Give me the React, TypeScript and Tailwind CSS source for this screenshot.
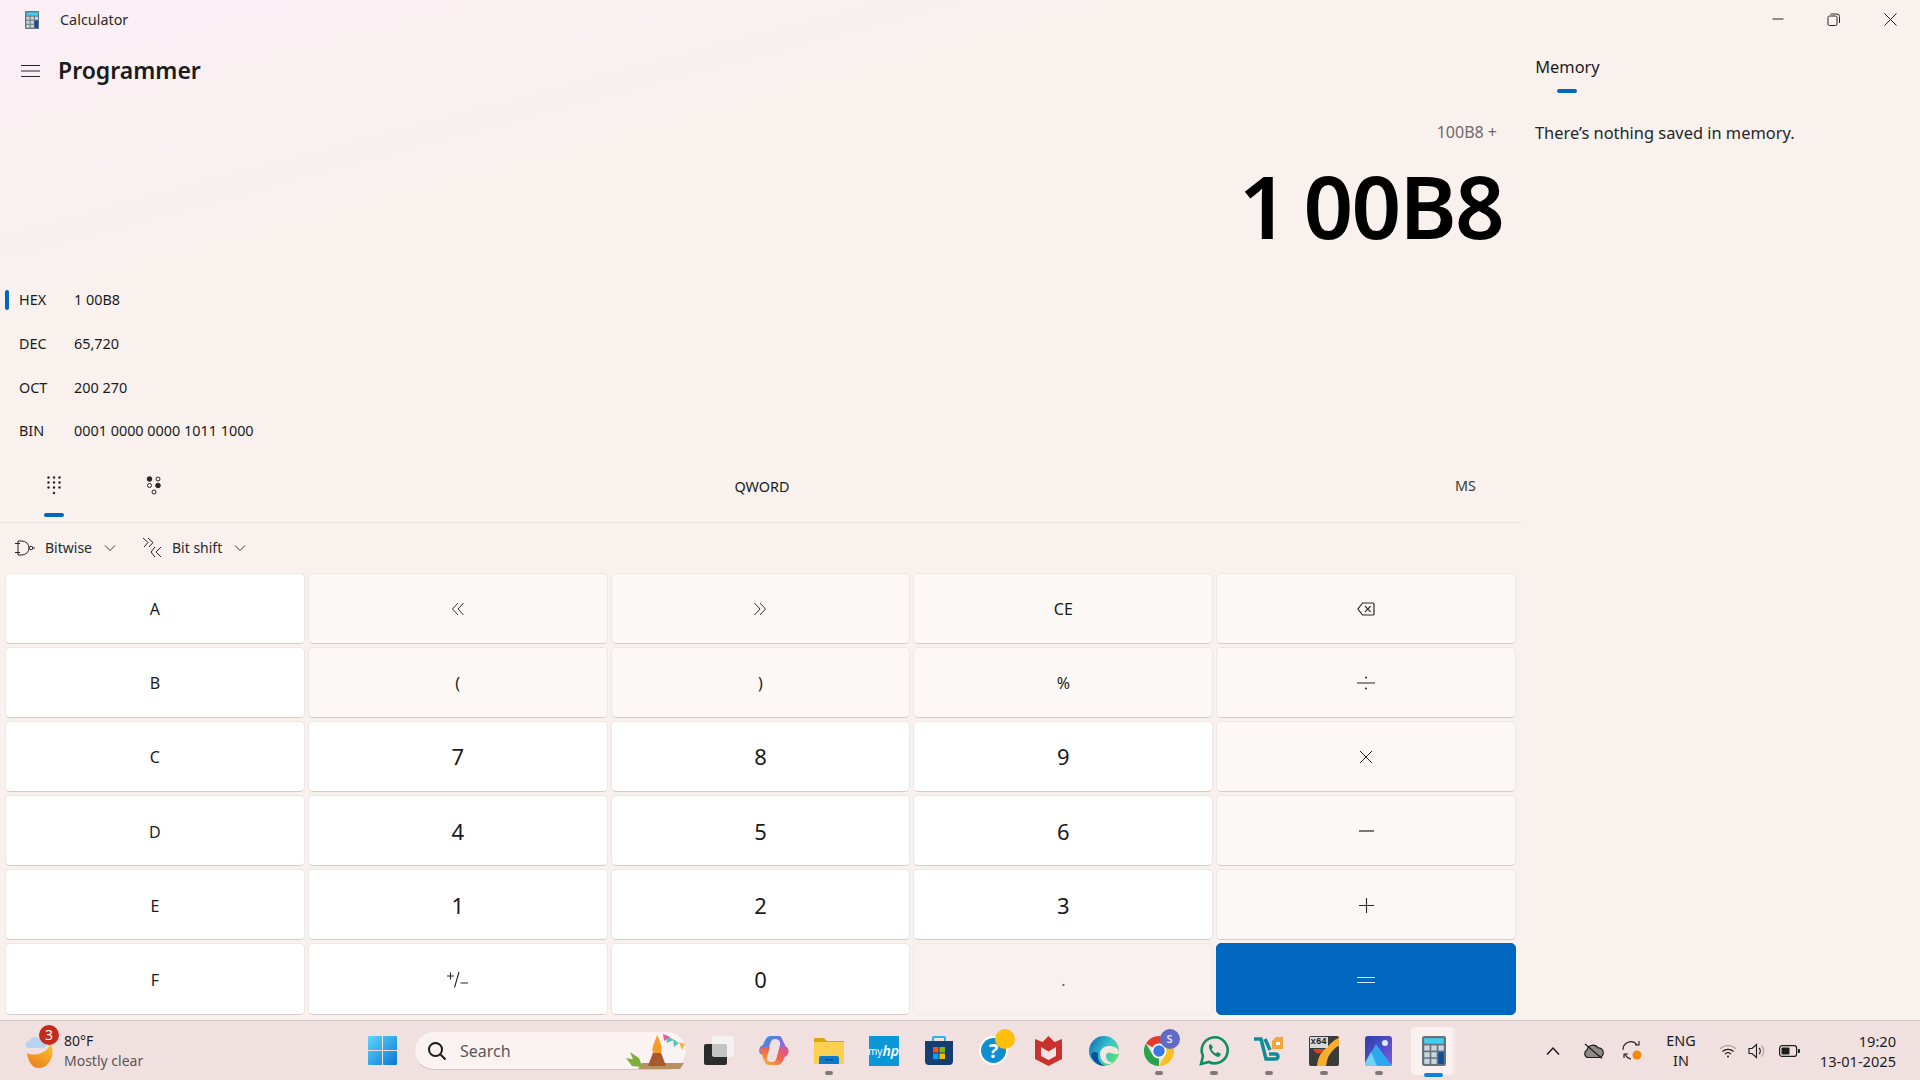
import React from "react";

const Chevron: React.FC<{ dir?: "down" | "up" }> = ({ dir = "down" }) => (
  <svg width="12" height="12" viewBox="0 0 12 12" fill="none" stroke="#3a3a3a" strokeWidth="1">
    <path d={dir === "down" ? "M1 3.5 6 8.5 11 3.5" : "M1 8.5 6 3.5 11 8.5"} />
  </svg>
);

const CalcIcon: React.FC<{ size: number }> = ({ size }) => (
  <svg width={size * 0.8} height={size} viewBox="0 0 16 20">
    <rect x="0" y="0" width="16" height="20" rx="1.5" fill="#66717c" />
    <rect x="1.5" y="1.5" width="13" height="3.6" fill="#3fd0f0" />
    <rect x="1.5" y="6.3" width="3.6" height="3.4" fill="#c9d6de" />
    <rect x="6.2" y="6.3" width="3.6" height="3.4" fill="#c9d6de" />
    <rect x="10.9" y="6.3" width="3.6" height="3.4" fill="#c9d6de" />
    <rect x="1.5" y="10.8" width="3.6" height="3.4" fill="#c9d6de" />
    <rect x="6.2" y="10.8" width="3.6" height="3.4" fill="#c9d6de" />
    <rect x="1.5" y="15.2" width="3.6" height="3.4" fill="#c9d6de" />
    <rect x="6.2" y="15.2" width="3.6" height="3.4" fill="#c9d6de" />
    <rect x="10.9" y="10.8" width="3.6" height="7.8" fill="#0d4f94" />
  </svg>
);

const Stroke: React.FC<{ size?: number; w?: number; d: string; color?: string; sw?: number }> = ({
  size = 16,
  w,
  d,
  color = "#262626",
  sw = 1,
}) => (
  <svg width={w ?? size} height={size} viewBox={`0 0 ${w ?? size} ${size}`} fill="none" stroke={color} strokeWidth={sw}>
    <path d={d} />
  </svg>
);

type Key = { label?: string; icon?: React.ReactNode; kind: "white" | "soft" | "off" | "accent"; big?: boolean };

const keys: Key[] = [
  { label: "A", kind: "white" },
  { icon: <Stroke d="M8 2 2.5 8 8 14M13.5 2 8 8 13.5 14" color="#333" />, kind: "soft" },
  { icon: <Stroke d="M8 2 13.5 8 8 14M2.5 2 8 8 2.5 14" color="#333" />, kind: "soft" },
  { label: "CE", kind: "soft" },
  {
    icon: <Stroke w={18} size={14} d="M5.5 1H16a1 1 0 0 1 1 1V12a1 1 0 0 1-1 1H5.5L1 7ZM8 4.2 13.6 9.8M13.6 4.2 8 9.8" sw={1.2} />,
    kind: "soft",
  },
  { label: "B", kind: "white" },
  { label: "(", kind: "soft" },
  { label: ")", kind: "soft" },
  { label: "%", kind: "soft" },
  {
    icon: (
      <svg width="18" height="14" viewBox="0 0 18 14" fill="#262626">
        <rect x="0" y="6.5" width="18" height="1" />
        <circle cx="9" cy="1.5" r="1" />
        <circle cx="9" cy="12.5" r="1" />
      </svg>
    ),
    kind: "soft",
  },
  { label: "C", kind: "white" },
  { label: "7", kind: "white", big: true },
  { label: "8", kind: "white", big: true },
  { label: "9", kind: "white", big: true },
  { icon: <Stroke size={14} d="M1 1 13 13M13 1 1 13" />, kind: "soft" },
  { label: "D", kind: "white" },
  { label: "4", kind: "white", big: true },
  { label: "5", kind: "white", big: true },
  { label: "6", kind: "white", big: true },
  { icon: <Stroke size={15} d="M0 7H15" sw={1.2} />, kind: "soft" },
  { label: "E", kind: "white" },
  { label: "1", kind: "white", big: true },
  { label: "2", kind: "white", big: true },
  { label: "3", kind: "white", big: true },
  { icon: <Stroke size={15} d="M0 7.5H15M7.5 0V15" sw={1.1} />, kind: "soft" },
  { label: "F", kind: "white" },
  {
    icon: <Stroke w={21} size={17} d="M0 5H7M3.5 1.5V8.5M7.5 16.5 12 1M13.5 12H21" sw={1.1} />,
    kind: "white",
  },
  { label: "0", kind: "white", big: true },
  { label: ".", kind: "off" },
  { icon: <Stroke w={18} size={8} d="M0 1.5H18M0 6.5H18" color="#d5e6f6" sw={1.2} />, kind: "accent" },
];

const keyClass = {
  white: "bg-white border-[#ece6e4] border-b-[#d3cac9]",
  soft: "bg-[#fbf8f6] border-[#ece6e4] border-b-[#d3cac9]",
  off: "bg-[#f9f1ef] border-[#f1e9e7] text-[#6b6361]",
  accent: "bg-[#0067c0] border-[#0067c0]",
};

const modes = [
  { name: "HEX", value: "1 00B8", on: true },
  { name: "DEC", value: "65,720" },
  { name: "OCT", value: "200 270" },
  { name: "BIN", value: "0001 0000 0000 1011 1000" },
];

const Dots = () => (
  <svg width="14" height="19" viewBox="0 0 14 19" fill="#262626">
    {[1.5, 7, 12.5].map((x) =>
      [1.5, 6.5, 11.5].map((y) => <circle key={`${x}-${y}`} cx={x} cy={y} r="1.2" />)
    )}
    <circle cx="7" cy="17" r="1.2" />
  </svg>
);

const BitDots = () => (
  <svg width="16" height="19" viewBox="0 0 16 19" fill="none" stroke="#262626" strokeWidth="1">
    <circle cx="3.5" cy="3" r="2.3" fill="#262626" />
    <circle cx="12" cy="3" r="2" />
    <circle cx="3.5" cy="9.5" r="2" />
    <circle cx="12" cy="9.5" r="2.3" fill="#262626" />
    <circle cx="8" cy="16" r="2" />
  </svg>
);

const TaskIcon: React.FC<{ children: React.ReactNode; running?: boolean }> = ({ children, running }) => (
  <div className="relative flex h-[60px] w-[55px] items-center justify-center">
    {children}
    {running && <span className="absolute bottom-[6px] h-[4px] w-[8px] rounded-full bg-[#7f7778]" />}
  </div>
);

const WindowsLogo = () => (
  <svg width="29" height="29" viewBox="0 0 29 29">
    <defs>
      <linearGradient id="win" x1="0" y1="0" x2="1" y2="1">
        <stop offset="0" stopColor="#5fd4fb" />
        <stop offset="1" stopColor="#0a78d4" />
      </linearGradient>
    </defs>
    <path d="M0 1a1 1 0 0 1 1-1H14V14H0ZM15 0H28a1 1 0 0 1 1 1V14H15ZM0 15H14V29H1a1 1 0 0 1-1-1ZM15 15H29V28a1 1 0 0 1-1 1H15Z" fill="url(#win)" />
  </svg>
);

const Bonfire = () => (
  <svg width="62" height="36" viewBox="0 0 62 36">
    <path d="M14 36 18 30H60L56 36Z" fill="#b79063" />
    <path d="M2 25 12 27 18 34 8 33ZM6 19 15 25 18 33 10 29Z" fill="#7fae3c" />
    <path d="M24 33 33 9 42 33Z" fill="#a9592c" />
    <path d="M33 2C36 9 39 13 37 20H29C27 14 31 9 33 2Z" fill="#f59b26" />
    <path d="M42 2 50 7 43 10ZM49 6 55 10 50 14Z" fill="#4cc9b8" />
    <path d="M39 1 46 4 40 8Z" fill="#e85aa8" />
    <path d="M55 9 61 11 58 17Z" fill="#f2b640" />
  </svg>
);

const Taskbar = () => (
  <div className="flex h-[60px] items-center border-t border-[#cfc6c5] bg-[#f0e0df] text-[#1d1d1d]">
    <div className="relative ml-[24px] flex w-[331px] items-center gap-[9px]">
      <svg width="31" height="36" viewBox="0 0 31 36">
        <defs>
          <linearGradient id="moon" x1="0.8" y1="0" x2="0.3" y2="1">
            <stop offset="0" stopColor="#f9c52c" />
            <stop offset="1" stopColor="#ee7f1e" />
          </linearGradient>
        </defs>
        <path d="M3 20C12 24 23 20 27 10 32 24 24 35 14 35 8 35 4 28 3 20Z" fill="url(#moon)" />
        <path d="M3 15A4 4 0 0 1 5 8 7 7 0 0 1 17 7 4 4 0 0 1 20 15Z" fill="#b9d3f3" />
      </svg>
      <span className="absolute left-[15px] top-[-6px] flex h-[20px] w-[20px] items-center justify-center rounded-full bg-[#c42b1c] text-[14px] leading-none text-white">
        3
      </span>
      <div className="flex flex-col text-[14px] leading-[20px]">
        <span>80°F</span>
        <span className="text-[#5b5557]">Mostly clear</span>
      </div>
    </div>
    <div className="flex h-[60px] w-[59px] items-center justify-start pl-[13px]">
      <WindowsLogo />
    </div>
    <div className="flex h-[39px] w-[273px] items-center rounded-full border border-[#ecdfdd] border-b-[#d3c8c8] bg-[#faf3f1] pl-[12px]">
      <svg width="20" height="20" viewBox="0 0 20 20" fill="none" stroke="#1a1a1a" strokeWidth="2">
        <circle cx="8.5" cy="8.5" r="6.5" />
        <path d="M13.5 13.5 18.5 18.5" />
      </svg>
      <span className="ml-[13px] flex-1 text-[16px] text-[#5b5557]">Search</span>
      <Bonfire />
    </div>
    <div className="flex pl-[4px]">
      <TaskIcon>
        <svg width="30" height="29" viewBox="0 0 30 29">
          <rect x="0" y="8" width="23" height="21" rx="2" fill="#2b2b2b" />
          <rect x="8" y="0" width="22" height="21" rx="2" fill="#f7f7f7" fillOpacity="0.75" />
        </svg>
      </TaskIcon>
      <TaskIcon>
        <svg width="30" height="29" viewBox="0 0 30 29">
          <defs>
            <linearGradient id="cop1" x1="0" y1="0" x2="1" y2="1">
              <stop offset="0" stopColor="#1f9be0" />
              <stop offset="0.5" stopColor="#7a6fe0" />
              <stop offset="1" stopColor="#e85aa8" />
            </linearGradient>
            <linearGradient id="cop2" x1="0" y1="1" x2="1" y2="0">
              <stop offset="0" stopColor="#f5c23c" />
              <stop offset="0.5" stopColor="#f0694a" />
              <stop offset="1" stopColor="#d84fa8" />
            </linearGradient>
          </defs>
          <path d="M11 0H20C22 0 23 2 24 5L28 13C31 16 28 21 25 21H18L21 9C22 5 19 3 16 3 13 3 12 5 11 8L8 18 1 18C-1 14 1 10 4 9 6 4 8 0 11 0Z" fill="url(#cop1)" />
          <path d="M19 29H10C7 29 6 27 5 24L2 17C0 13 2 11 5 11H11L8 21C7 25 10 26 13 26 16 26 17 24 18 21L21 11 28 11C31 15 29 19 26 20 24 25 22 29 19 29Z" fill="url(#cop2)" />
        </svg>
      </TaskIcon>
      <TaskIcon running>
        <svg width="30" height="27" viewBox="0 0 30 27">
          <path d="M0 2a1 1 0 0 1 1-1H10L13 4H30V10H0Z" fill="#d9a512" />
          <rect x="0" y="5" width="30" height="22" rx="1" fill="#fbd04f" />
          <path d="M5 27V21a2 2 0 0 1 2-2H23a2 2 0 0 1 2 2V27Z" fill="#0a7ccf" />
          <rect x="11" y="22" width="8" height="1.5" fill="#06457c" />
        </svg>
      </TaskIcon>
      <TaskIcon>
        <div className="flex h-[30px] w-[30px] items-center justify-center bg-[#0b96d8] text-[10px] leading-none text-white">
          my<span className="text-[14px] font-semibold italic">hp</span>
        </div>
      </TaskIcon>
      <TaskIcon>
        <svg width="30" height="30" viewBox="0 0 30 30">
          <path d="M9 6V2a1 1 0 0 1 1-1H20a1 1 0 0 1 1 1V6" fill="none" stroke="#2bb2e6" strokeWidth="2" />
          <path d="M1 5H29V25a4 4 0 0 1-4 4H5a4 4 0 0 1-4-4Z" fill="#153e72" />
          <rect x="9" y="11" width="5.5" height="5.5" fill="#f25022" />
          <rect x="15.5" y="11" width="5.5" height="5.5" fill="#7fba00" />
          <rect x="9" y="17.5" width="5.5" height="5.5" fill="#00a4ef" />
          <rect x="15.5" y="17.5" width="5.5" height="5.5" fill="#ffb900" />
        </svg>
      </TaskIcon>
      <TaskIcon>
        <div className="relative flex h-[29px] w-[29px] items-center justify-center rounded-full border-2 border-white bg-[#0f8fd0] text-[20px] font-bold leading-none text-white">
          ?
          <span className="absolute right-[-9px] top-[-9px] h-[20px] w-[20px] rounded-full bg-[#ffc00c]" />
        </div>
      </TaskIcon>
      <TaskIcon>
        <svg width="27" height="30" viewBox="0 0 27 30">
          <path d="M0 3 7.5 6 13.5 0 19.5 6 27 3V23L13.5 30 0 23Z" fill="#c8322e" />
          <path d="M6 11 13.5 15.5 21 11V20L13.5 24 6 20Z" fill="#f3e4e2" />
        </svg>
      </TaskIcon>
      <TaskIcon>
        <svg width="30" height="30" viewBox="0 0 30 30">
          <defs>
            <linearGradient id="edge1" x1="0" y1="0" x2="1" y2="0.6">
              <stop offset="0" stopColor="#0d63b8" />
              <stop offset="0.6" stopColor="#33c6c8" />
              <stop offset="1" stopColor="#5fdc7a" />
            </linearGradient>
          </defs>
          <circle cx="15" cy="15" r="15" fill="url(#edge1)" />
          <path d="M30 17C30 12 25 10 20 10 14 10 11 14 11 18 11 25 17 30 24 27 20 26 17 24 17 20 17 17 19 16 22 17 25 18 28 19 30 17Z" fill="#f4e4e2" />
          <path d="M2 19C4 27 11 30 16 30 11 28 8 23 9 17 5 15 3 16 2 19Z" fill="#0b4f9f" />
        </svg>
      </TaskIcon>
      <TaskIcon running>
        <div className="relative">
          <svg width="30" height="30" viewBox="0 0 30 30">
            <path d="M15 0A15 15 0 0 1 28 7.5H15A7.5 7.5 0 0 0 8.5 11.2L2 7.5A15 15 0 0 1 15 0Z" fill="#e33b2e" />
            <path d="M28 7.5A15 15 0 0 1 15 30L21.5 18.7A7.5 7.5 0 0 0 21.5 11.2Z" fill="#f9c11f" />
            <path d="M2 7.5 8.5 18.7A7.5 7.5 0 0 0 15 22.5L15 30A15 15 0 0 1 2 7.5Z" fill="#2ba24c" />
            <circle cx="15" cy="15" r="6.5" fill="#3b78e7" stroke="#fff" strokeWidth="1.5" />
          </svg>
          <span className="absolute right-[-6px] top-[-7px] flex h-[20px] w-[20px] items-center justify-center rounded-full bg-[#5f6bc4] text-[11px] font-semibold leading-none text-[#e3e5f5]">
            S
          </span>
        </div>
      </TaskIcon>
      <TaskIcon running>
        <svg width="30" height="30" viewBox="0 0 30 30" fill="none">
          <path d="M2 28 4 20A13 13 0 1 1 10 26Z" stroke="#128c63" strokeWidth="2.6" />
          <path d="M10 9C9 14 15 21 20 21L22 18 18.5 16 17 17.5C15 16.5 13.5 15 12.5 13L14 11.5 12 8Z" fill="#128c63" />
        </svg>
      </TaskIcon>
      <TaskIcon running>
        <svg width="31" height="30" viewBox="0 0 31 30" fill="none">
          <path d="M1 3H8L13 23H22C26 23 26 18 22 18H16M12 3 17 14" stroke="#128a97" strokeWidth="3.5" />
          <path d="M19 5 23 1H30V13H19Z" fill="#f5a43c" />
          <rect x="23" y="6" width="4" height="3" fill="#fff" />
        </svg>
      </TaskIcon>
      <TaskIcon running>
        <div className="relative flex h-[30px] w-[30px] overflow-hidden rounded-[2px] bg-[#3c3b3c]">
          <svg width="30" height="30" viewBox="0 0 30 30">
            <path d="M8 30C9 20 13 15 17 12 22 8 24 4 30 2V10C26 11 24 14 21 18 18 22 18 26 17 30Z" fill="#f8ae2d" />
            <path d="M4 13C7 19 13 19 15 13Z" fill="#d9471f" />
          </svg>
          <span className="absolute left-[1px] top-[1px] bg-[#d8d8d8] px-[1px] font-['Liberation_Mono',monospace] text-[9px] font-bold leading-[11px] text-[#222]">
            x64
          </span>
        </div>
      </TaskIcon>
      <TaskIcon running>
        <svg width="27" height="30" viewBox="0 0 27 30">
          <defs>
            <linearGradient id="ph" x1="0" y1="0" x2="1" y2="1">
              <stop offset="0" stopColor="#2a3fa8" />
              <stop offset="1" stopColor="#7b5be0" />
            </linearGradient>
          </defs>
          <rect width="27" height="30" rx="3" fill="url(#ph)" />
          <path d="M0 27 11 8 27 30H3A3 3 0 0 1 0 27Z" fill="#2fa7f0" />
          <path d="M0 27 6 16 12 30H3A3 3 0 0 1 0 27Z" fill="#6fd3f7" />
          <circle cx="20" cy="7" r="3" fill="#dbe9fb" />
        </svg>
      </TaskIcon>
      <div className="relative flex h-[60px] w-[55px] items-center justify-center">
        <div className="absolute left-[6px] top-[6px] h-[48px] w-[43px] rounded-[4px] bg-[#f6ebe9]" />
        <div className="absolute left-[5px] top-[6px] h-[48px] w-[41px] rounded-[4px] bg-[#f9f1ef]" />
        <div className="relative">
          <CalcIcon size={30} />
        </div>
        <span className="absolute bottom-[4px] left-[18px] h-[4px] w-[19px] rounded-full bg-[#0a84d8]" />
      </div>
    </div>
    <div className="ml-[77px] flex w-[30px] justify-center">
      <Stroke size={12} w={14} d="M1 9.5 7 3 13 9.5" color="#1d1d1d" sw={1.5} />
    </div>
    <div className="ml-[13px] flex w-[24px] justify-center">
      <svg width="21" height="16" viewBox="0 0 21 16" fill="#8f8a8a" stroke="#1d1d1d" strokeWidth="1.2">
        <path d="M5 14.5A4 4 0 0 1 4 7 6 6 0 0 1 15 5 4.7 4.7 0 0 1 16 14.5Z" />
        <path d="M2 1 19 15.5" fill="none" />
      </svg>
    </div>
    <div className="ml-[15px] flex w-[24px] justify-center">
      <svg width="20" height="22" viewBox="0 0 20 22" fill="none" stroke="#1d1d1d" strokeWidth="1.1">
        <path d="M1 10A8 8 0 0 1 15 4.5M13 5H17V1M2 18V14H6" />
        <path d="M3 14A8 8 0 0 0 9 19" />
        <circle cx="15" cy="15" r="4.5" fill="#f28a05" stroke="none" />
      </svg>
    </div>
    <div className="ml-[18px] flex w-[38px] flex-col items-center text-[14.4px] leading-[20px]">
      <span>ENG</span>
      <span>IN</span>
    </div>
    <div className="ml-[19px] flex items-center gap-[11px]">
      <svg width="18" height="14" viewBox="0 0 18 14" fill="none" stroke="#1d1d1d" strokeWidth="1.2">
        <path d="M1 5A11 11 0 0 1 17 5" stroke="#aaa2a2" />
        <path d="M3.5 7.5A8 8 0 0 1 14.5 7.5M6 10A4.5 4.5 0 0 1 12 10" />
        <circle cx="9" cy="12.5" r="1" fill="#1d1d1d" stroke="none" />
      </svg>
      <svg width="18" height="16" viewBox="0 0 18 16" fill="none" stroke="#1d1d1d" strokeWidth="1.1">
        <path d="M1 5.5H4L8.5 1.5V14.5L4 10.5H1Z" />
        <path d="M11 5A4 4 0 0 1 11 11" />
        <path d="M13.5 2.5A8 8 0 0 1 13.5 13.5" stroke="#aaa2a2" />
      </svg>
      <svg width="21" height="12" viewBox="0 0 21 12" className="ml-[2px]">
        <rect x="0.6" y="0.6" width="17" height="10.8" rx="2.5" fill="none" stroke="#1d1d1d" strokeWidth="1.2" />
        <rect x="2.5" y="2.5" width="8" height="7" rx="1" fill="#1d1d1d" />
        <path d="M19 4h1a1 1 0 0 1 1 1v2a1 1 0 0 1-1 1h-1Z" fill="#1d1d1d" />
      </svg>
    </div>
    <div className="ml-auto flex flex-col items-end pr-[24px] text-[14.6px] leading-[20px]">
      <span>19:20</span>
      <span>13-01-2025</span>
    </div>
  </div>
);

export default function App() {
  return (
    <div className="flex h-[1080px] w-[1920px] flex-col overflow-hidden font-['Noto_Sans',sans-serif] text-[#1b1b1b]">
      <div className="h-[1020px] bg-[linear-gradient(165deg,#fbeff6_0%,#f8f1ee_20%,#f8f1ee_100%)]">
        <div className="flex h-[40px] items-center">
          <div className="ml-[25px] flex w-[35px]">
            <CalcIcon size={18} />
          </div>
          <span className="text-[14.4px] text-[#2a2a2a]">Calculator</span>
          <div className="ml-auto flex pb-[2px] pr-[2px]">
            <div className="flex h-[36px] w-[56px] items-center justify-center">
              <Stroke size={12} d="M0.5 6H11.5" />
            </div>
            <div className="flex h-[36px] w-[56px] items-center justify-center pr-[2px]">
              <svg width="13" height="13" viewBox="0 0 13 13" fill="none" stroke="#262626">
                <rect x="1" y="3" width="9" height="9.5" rx="1.5" />
                <path d="M3.5 1H10a2.5 2.5 0 0 1 2.5 2.5V10" />
              </svg>
            </div>
            <div className="flex h-[36px] w-[56px] items-center justify-center">
              <Stroke size={13} d="M0.5 0.5 12.5 12.5M12.5 0.5 0.5 12.5" />
            </div>
          </div>
        </div>
        <div className="flex h-[980px]">
          <div className="flex w-[1522px] flex-col">
            <div className="flex h-[60px] items-center">
              <div className="ml-[21px] flex w-[37px] pt-[1px]">
                <Stroke w={19} size={14} d="M0 1.5H19M0 7H19M0 12.5H19" />
              </div>
              <span className="text-[23px] font-semibold">Programmer</span>
            </div>
            <div className="mt-[20px] flex h-[24px] items-center justify-end pr-[25px] text-[16px] text-[#6f6a6a]">
              100B8 +
            </div>
            <div className="mt-[6px] flex h-[110px] items-center justify-end pr-[19px] text-[87px] font-semibold leading-none tracking-[-1.8px] text-black [word-spacing:-4px]">
              1 00B8
            </div>
            <div className="mt-[18px] flex flex-col">
              {modes.map((m) => (
                <div key={m.name} className="flex h-[43.8px] items-center pl-[5px] text-[14.4px]">
                  <span className={m.on ? "h-[20px] w-[4px] rounded-full bg-[#0067c0]" : "w-[4px]"} />
                  <span className="ml-[10px] w-[55px]">{m.name}</span>
                  <span>{m.value}</span>
                </div>
              ))}
            </div>
            <div className="flex h-[70px] items-start border-b border-[#e9e2e0]">
              <div className="relative flex h-[69px] w-[108px] justify-center pt-[23px]">
                <Dots />
                <span className="absolute bottom-[5px] left-[44px] h-[4px] w-[20px] rounded-full bg-[#0067c0]" />
              </div>
              <div className="flex w-[92px] justify-center pt-[23px]">
                <BitDots />
              </div>
              <span className="mt-[24px] w-[1124px] text-center text-[14.4px] leading-[20px]">QWORD</span>
              <span className="ml-[131px] mt-[23px] text-[14.4px] leading-[20px] text-[#3a3a3a]">MS</span>
            </div>
            <div className="flex h-[49.4px] items-center text-[14px] text-[#2a2a2a]">
              <div className="ml-[15px] flex items-center">
                <svg width="20" height="16" viewBox="0 0 20 16" fill="none" stroke="#262626">
                  <path d="M0 3.5H5M0 12.5H5M3 1H7A7 7 0 0 1 7 15H3ZM15 8H20" />
                  <circle cx="16" cy="8" r="1.8" fill="#f8f1ee" />
                </svg>
                <span className="ml-[10px]">Bitwise</span>
                <span className="ml-[12px] flex">
                  <Chevron />
                </span>
              </div>
              <div className="ml-[26px] flex items-center">
                <svg width="20" height="21" viewBox="0 0 20 21" fill="none" stroke="#262626">
                  <path d="M1 1 6 5.5 2 10M6 1 11 5.5 7 10M13 10 9 15 13 20M19 10 14 15 19 20" />
                </svg>
                <span className="ml-[10px]">Bit shift</span>
                <span className="ml-[12px] flex">
                  <Chevron />
                </span>
              </div>
            </div>
            <div className="ml-[5px] grid h-[442px] w-[1511px] grid-cols-5 grid-rows-6 gap-[3px]">
              {keys.map((k, i) => (
                <div
                  key={i}
                  className={`flex items-center justify-center rounded-[5px] border ${keyClass[k.kind]} ${
                    k.big ? "pt-[1px] text-[22px]" : "pt-[2px] text-[16px]"
                  }`}
                >
                  {k.icon ?? k.label}
                </div>
              ))}
            </div>
          </div>
          <div className="flex flex-1 flex-col pl-[13px]">
            <div className="relative h-[53px] w-[65px] pt-[15px] text-center text-[16.4px] leading-[24px]">
              Memory
              <span className="absolute bottom-[0px] left-[22px] h-[4px] w-[20px] rounded-full bg-[#0067c0]" />
            </div>
            <div className="mt-[28px] text-[16.4px] leading-[24px] text-[#262626]">There’s nothing saved in memory.</div>
          </div>
        </div>
      </div>
      <Taskbar />
    </div>
  );
}
